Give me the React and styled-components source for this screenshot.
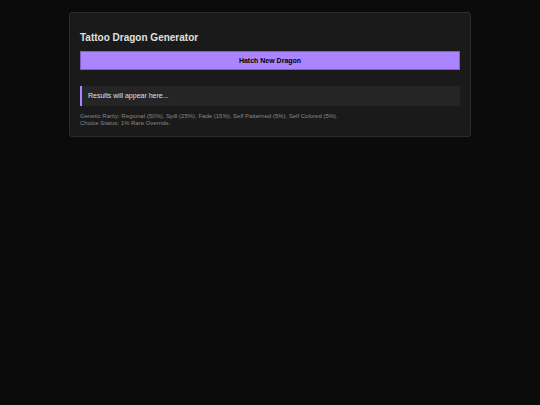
import { useState } from "react";
import styled, { createGlobalStyle } from "styled-components";

const GlobalStyle = createGlobalStyle`
  * {
    box-sizing: border-box;
  }

  body {
    margin: 0;
    background: #0b0b0b;
    color: #e0e0e0;
    font-family: "Liberation Sans", Arial, sans-serif;
  }
`;

const Page = styled.main`
  padding: 12px 16px;
`;

const Card = styled.section`
  max-width: 402px;
  margin: 0 auto;
  padding: 18px 10px 9px;
  background: #1a1a1a;
  border: 1px solid #2b2b2b;
  border-radius: 3px;
`;

const Title = styled.h1`
  margin: 0 0 6px;
  font-size: 10px;
  line-height: 14px;
`;

const HatchButton = styled.button`
  display: block;
  width: 100%;
  height: 19px;
  padding: 0;
  background: #ab85ff;
  border: 1px solid #7c62b6;
  color: #000;
  font-family: inherit;
  font-size: 7px;
  font-weight: bold;
  line-height: 16px;
  cursor: pointer;
`;

const Result = styled.div`
  margin-top: 16px;
  padding: 6px;
  background: #252525;
  border-left: 2px solid #ab85ff;
  font-size: 7px;
  line-height: 8px;
`;

const Note = styled.p`
  margin: 7px 0 0;
  color: #888;
  font-size: 6px;
  line-height: 7px;
`;

const rarities = [
  ["Regional", 50],
  ["Spill", 25],
  ["Fade", 15],
  ["Self Patterned", 5],
  ["Self Colored", 5],
];

function rollRarity() {
  if (Math.random() < 0.01) return "Choice Status";

  let roll = Math.random() * 100;
  for (const [name, chance] of rarities) {
    roll -= chance;
    if (roll < 0) return name;
  }
  return rarities[0][0];
}

export default function App() {
  const [result, setResult] = useState("Results will appear here...");

  return (
    <>
      <GlobalStyle />
      <Page>
        <Card>
          <Title>Tattoo Dragon Generator</Title>
          <HatchButton type="button" onClick={() => setResult(rollRarity())}>
            Hatch New Dragon
          </HatchButton>
          <Result aria-live="polite">{result}</Result>
          <Note>
            Genetic Rarity:{" "}
            {rarities.map(([name, chance]) => `${name} (${chance}%)`).join(", ")}.
            <br />
            Choice Status: 1% Rare Override.
          </Note>
        </Card>
      </Page>
    </>
  );
}
